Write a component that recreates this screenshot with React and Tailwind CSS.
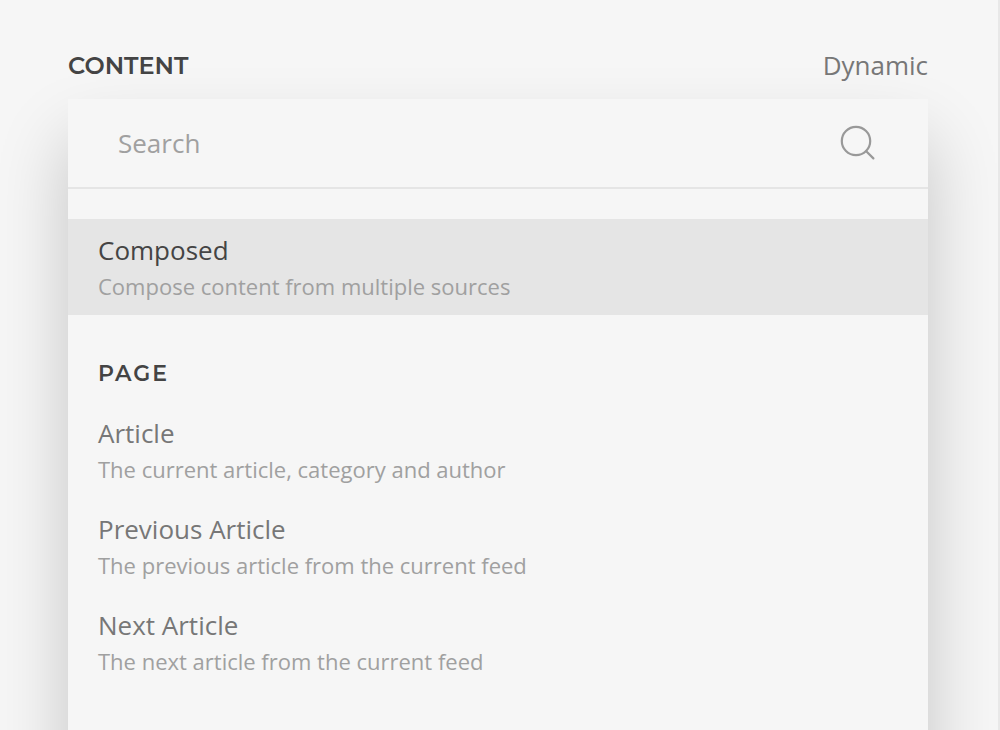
const groups = [
  {
    title: 'Page',
    items: [
      { name: 'Article', text: 'The current article, category and author' },
      { name: 'Previous Article', text: 'The previous article from the current feed' },
      { name: 'Next Article', text: 'The next article from the current feed' },
    ],
  },
];

function Option({ name, text, active }) {
  return (
    <button
      type="button"
      className={
        active
          ? 'block w-full bg-[#e5e5e5] px-[30px] py-3 text-left text-[#444]'
          : 'block w-full px-[30px] py-3 text-left text-[#777]'
      }
    >
      <span className="block text-[26px] leading-[38px]">{name}</span>
      <span className="block text-[22px] leading-[34px] text-[#a0a0a0]">{text}</span>
    </button>
  );
}

export default function App() {
  return (
    <div className="h-screen overflow-hidden border-r-2 border-[#e8e8e8] bg-[#f6f6f6] pr-[70px] pl-[68px] font-['Open_Sans',sans-serif] antialiased">
      <header className="flex items-start justify-between pt-12 pb-[15px]">
        <h1 className="font-[Montserrat,'Open_Sans',sans-serif] text-[24px] leading-[36px] font-semibold text-[#444] uppercase">
          Content
        </h1>
        <button type="button" className="text-[26px] leading-[34px] text-[#777]">
          Dynamic
        </button>
      </header>
      <main className="h-screen bg-[#f6f6f6] shadow-[0_40px_68px_rgba(0,0,0,0.2)]">
        <label className="flex h-[90px] items-center border-b-2 border-[#e5e5e5] px-[50px]">
          <input
            type="text"
            aria-label="Search"
            placeholder="Search"
            className="min-w-0 flex-1 bg-transparent text-[26px] leading-[36px] text-[#444] outline-none placeholder:text-[#a0a0a0]"
          />
          <svg className="size-10" viewBox="0 0 40 40" fill="none" stroke="#999" strokeWidth="2.2" strokeLinecap="round" aria-hidden="true">
            <circle cx="18" cy="18" r="14.2" />
            <path d="M28.2 28.2l7.2 7.2" />
          </svg>
        </label>
        <div className="pt-[30px]">
          <Option name="Composed" text="Compose content from multiple sources" active />
          {groups.map((g) => (
            <section key={g.title}>
              <h2 className="px-[30px] pt-[43px] pb-3 font-[Montserrat,'Open_Sans',sans-serif] text-[22px] leading-[32px] font-semibold tracking-[2px] text-[#444] uppercase">
                {g.title}
              </h2>
              {g.items.map((i) => (
                <Option key={i.name} {...i} />
              ))}
            </section>
          ))}
        </div>
      </main>
    </div>
  );
}
